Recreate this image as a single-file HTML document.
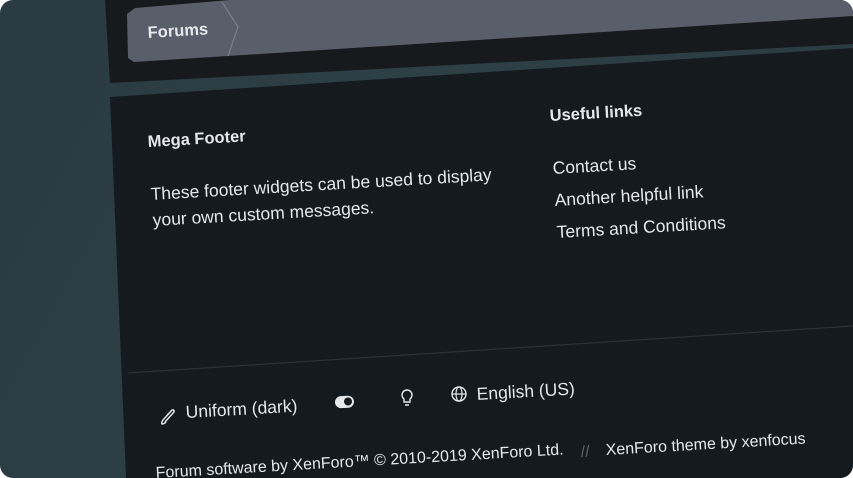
<!DOCTYPE html>
<html><head><meta charset="utf-8"><style>
html,body{margin:0;padding:0;background:#fff;width:853px;height:478px;overflow:hidden}
svg text{font-family:"Liberation Sans",sans-serif;fill:#e6e8ea}
</style></head><body>
<svg width="853" height="478" viewBox="0 0 853 478" xmlns="http://www.w3.org/2000/svg">
<defs>
<linearGradient id="bg" x1="0" y1="0" x2="1" y2="0.3">
<stop offset="0" stop-color="#293b41"/><stop offset="0.5" stop-color="#2d4046"/><stop offset="1" stop-color="#2a3c42"/>
</linearGradient>
<clipPath id="c"><rect width="853" height="478" rx="13"/></clipPath>
</defs>
<g clip-path="url(#c)">
<rect width="853" height="478" fill="url(#bg)"/>
<polygon points="105,0 853,0 853,44 110,83" fill="#17191d"/>
<polygon points="127,14 135,8 230,0 853,0 853,16 134,62 128,58" fill="#5a5e6b"/>
<polyline points="222,2 238,27 228,56" fill="none" stroke="#7a7e8a" stroke-width="1.2"/>
<polygon points="110,97 853,48 853,478 126,478" fill="#151a1f"/>
<line x1="128" y1="373" x2="853" y2="326" stroke="#2c3137" stroke-width="1.2"/>
<text x="148" y="38" font-size="16.5" font-weight="bold" transform="rotate(-3.5 148 38)">Forums</text>
<text x="148" y="147" font-size="16.5" font-weight="bold" transform="rotate(-3.3 148 147)">Mega Footer</text>
<text x="151" y="200" font-size="17.5" transform="rotate(-3.3 151 200)">These footer widgets can be used to display</text>
<text x="153" y="226" font-size="17.5" transform="rotate(-3.3 153 226)">your own custom messages.</text>
<text x="550" y="121" font-size="16.5" font-weight="bold" transform="rotate(-3.3 550 121)">Useful links</text>
<text x="553" y="174" font-size="17.5" transform="rotate(-3.3 553 174)">Contact us</text>
<text x="555" y="206" font-size="17.5" transform="rotate(-3.3 555 206)">Another helpful link</text>
<text x="557" y="238" font-size="17.5" transform="rotate(-3.3 557 238)">Terms and Conditions</text>
<path d="M163 420 l9 -10 a1.5 1.5 0 0 1 2 2 l-9 10 M163 420 q-2 3 -1 4 q2 0 4 -2" fill="none" stroke="#e6e8ea" stroke-width="1.5"/>
<text x="186" y="418" font-size="17.5" transform="rotate(-3.3 186 418)">Uniform (dark)</text>
<rect x="335" y="396" width="19" height="12" rx="6" fill="#e6e8ea" transform="rotate(-3.3 344 402)"/>
<circle cx="348" cy="401.5" r="4" fill="#151a1f"/>
<path d="M404 399 a5 5 0 1 1 6 0 v3 h-6 z M405 405 h4" fill="none" stroke="#e6e8ea" stroke-width="1.4"/>
<circle cx="459" cy="394" r="7" fill="none" stroke="#e6e8ea" stroke-width="1.4"/>
<ellipse cx="459" cy="394" rx="3" ry="7" fill="none" stroke="#e6e8ea" stroke-width="1.2"/>
<path d="M452 394 h14" stroke="#e6e8ea" stroke-width="1.2"/>
<text x="477" y="400" font-size="17.5" transform="rotate(-3.3 477 400)">English (US)</text>
<text x="156" y="478" font-size="16" transform="rotate(-3.3 156 478)">Forum software by XenForo™ © 2010-2019 XenForo Ltd.</text>
<text x="581" y="457" font-size="16" style="fill:#5d6268" transform="rotate(-3.3 581 457)">//</text>
<text x="606" y="455" font-size="16" transform="rotate(-3.3 606 455)">XenForo theme by xenfocus</text>
</g>
</svg>
</body></html>
